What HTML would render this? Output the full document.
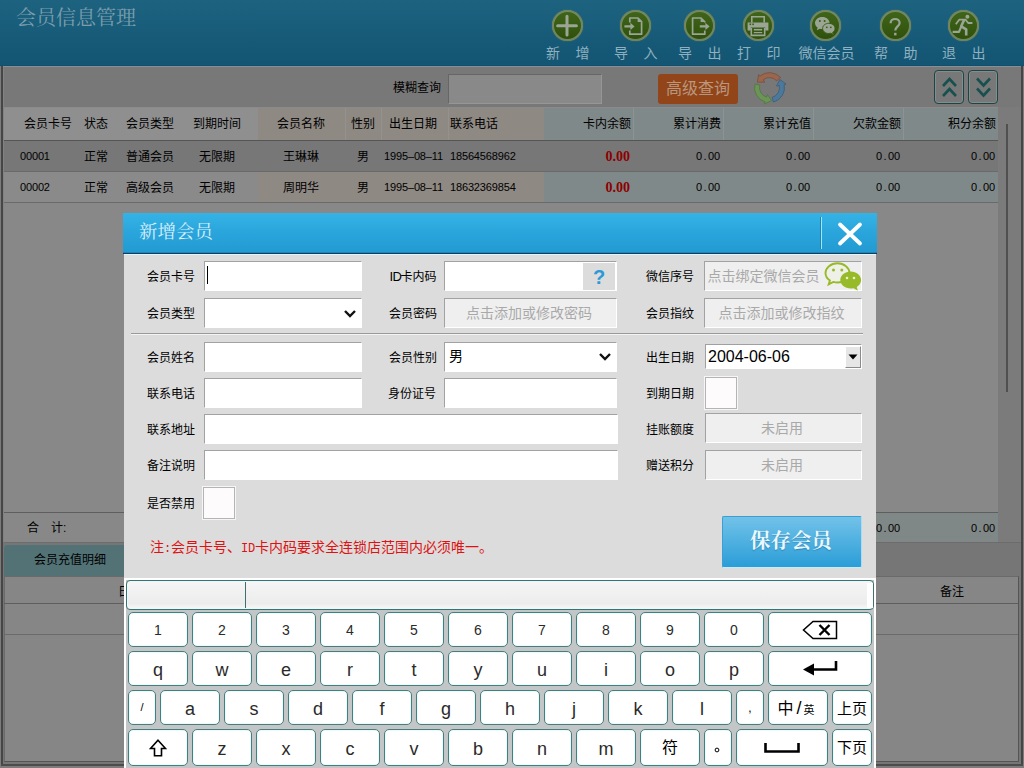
<!DOCTYPE html>
<html><head><meta charset="utf-8">
<style>
*{margin:0;padding:0;box-sizing:border-box}
html,body{width:1024px;height:768px;overflow:hidden}
body{position:relative;background:#888;font-family:"Liberation Sans","Noto Sans CJK SC",sans-serif;font-size:12px;color:#000}
.abs{position:absolute}
.t{position:absolute;white-space:nowrap;line-height:1}
/* header */
#hdr{left:0;top:0;width:1024px;height:66px;background:linear-gradient(#1d6380,#165a78 60%,#135573)}
#title{left:16px;top:8px;font-family:"Liberation Serif","Noto Serif CJK SC",serif;font-size:20px;color:#7d9dab;letter-spacing:0px}
.tb{position:absolute;top:9.800px;width:31.500px;height:31.500px;border-radius:50%;background:linear-gradient(#40651a,#375a12 55%,#2e4e0c);box-shadow:inset 0 0 0 1px #6f8562,inset 0 0 0 2px rgba(135,152,122,.75),0 0 1.500px rgba(125,145,115,.6)}.tb svg{position:absolute;left:-0.250px;top:-0.250px}
.tl{position:absolute;top:46px;font-size:14px;color:#8fb0be;white-space:nowrap;line-height:1}
/* bg */
#sbar{left:0;top:66px;width:1024px;height:41px;background:#787878}
.th{position:absolute;top:108px;height:32px;line-height:33px;font-size:12px;white-space:nowrap}
.c{text-align:center}.r{text-align:right}
.num{font-size:11px;letter-spacing:-0.15px}.num2{font-size:11px;letter-spacing:-0.1px}.p{display:inline-block;width:6px;text-align:center;font-style:normal}

#dlg{left:123px;top:213px;width:754px;height:555px}
#dtitle{left:0;top:0;width:754px;height:40px;background:linear-gradient(#35b3e5,#2ba6dd 45%,#229ad2)}
.lb{position:absolute;white-space:nowrap;font-size:12px;line-height:32px;height:30px;color:#000}
.in{position:absolute;height:30px;background:#fff;border:1px solid #a2a2a2;border-right-color:#fff;border-bottom-color:#fff}
.dis{background:#efefef;color:#a9a9a9;font-size:14px;line-height:29px;text-align:center;white-space:nowrap;padding-right:3px}
.ck{position:absolute;width:32px;height:32px;background:#fdfbfc;border:1px solid #b4b4b4;outline:1px solid #f6f6f6}
.k{position:absolute;height:35px;background:#fff;border:1px solid #4d7a7a;border-radius:5px;box-shadow:inset 0 0 0 1px #e6fdfd;text-align:center;font-size:18px;line-height:36px;color:#2a2a2a;white-space:nowrap}
.k.d{font-size:14px;line-height:34px}
.hw{display:inline-block;width:7px;text-align:center;font-size:12px;font-family:"Liberation Mono",monospace}
</style></head><body>
<!-- ===== background (dimmed) ===== -->
<div id="hdr" class="abs"></div>
<div id="title" class="t">会员信息管理</div>
<div id="sbar" class="abs"></div>

<div class="abs" style="left:0;top:65px;width:1024px;height:1px;background:#104f6d"></div>
<div class="abs" style="left:3px;top:66px;width:1018px;height:1px;background:#879097"></div>
<!-- toolbar icons -->
<div class="tb" style="left:551.5px"><svg width="32" height="32" viewBox="0 0 32 32"><path d="M16 6.300v18.800M6.600 15.700h18.800" stroke="#9aa595" stroke-width="3" stroke-linecap="round" fill="none"/></svg></div>
<div class="tb" style="left:619.5px"><svg width="32" height="32" viewBox="0 0 32 32"><path d="M10.800 12.500V8h8.200l3.600 3.600v12.600H10.800V20.400" stroke="#9aa595" stroke-width="1.700" fill="none" stroke-linejoin="round"/><path d="M18.600 8v4h4z" fill="#9aa595"/><path d="M5.400 15.200h6v-2.400l4.200 3.600-4.200 3.600v-2.400h-6z" fill="#9aa595"/></svg></div>
<div class="tb" style="left:683.5px"><svg width="32" height="32" viewBox="0 0 32 32"><path d="M21.800 20.400v3.800H9.600V8h8.400l3.800 3.800v0.800" stroke="#9aa595" stroke-width="1.700" fill="none" stroke-linejoin="round"/><path d="M17.600 8v4h4z" fill="#9aa595"/><path d="M16.800 15.200h5.600v-2.400l4.200 3.600-4.200 3.600v-2.400h-5.600z" fill="#9aa595"/></svg></div>
<div class="tb" style="left:742.5px"><svg width="32" height="32" viewBox="0 0 32 32"><path d="M9.800 12.500V6.800h12.400v5.700" stroke="#9aa595" stroke-width="1.600" fill="none"/><path d="M5.600 12.400h20.800v8H23.200v-3H8.800v3H5.600z" fill="#9aa595"/><rect x="7.500" y="13.500" width="1.600" height="1.600" fill="#3a5d13"/><rect x="10.300" y="13.500" width="1.600" height="1.600" fill="#3a5d13"/><path d="M9.300 18v7.400h13.400V18" fill="none" stroke="#9aa595" stroke-width="1.600"/><path d="M11.800 19.700h8.400" stroke="#9aa595" stroke-width="1.600"/><path d="M11.800 22.600h8.400" stroke="#9aa595" stroke-width="1.200"/></svg></div>
<div class="tb" style="left:809.5px"><svg width="32" height="32" viewBox="0 0 32 32"><path d="M13.300 7c-4.100 0-7.300 2.700-7.300 6 0 1.900 1 3.500 2.600 4.600l-.8 2.700 3-1.600c.8.200 1.600.3 2.500.3 4.100 0 7.300-2.700 7.300-6s-3.200-6-7.300-6z" fill="#9aa595"/><path d="M19.800 13.300c-3.400 0-6.200 2.300-6.200 5.100s2.800 5.100 6.200 5.100c.7 0 1.400-.1 2-.3l2.600 1.400-.7-2.300c1.400-.9 2.300-2.300 2.300-3.900 0-2.800-2.800-5.100-6.200-5.100z" fill="#9aa595" stroke="#3a5d13" stroke-width="1"/><circle cx="10.800" cy="11" r="1" fill="#3a5d13"/><circle cx="15.600" cy="11" r="1" fill="#3a5d13"/><circle cx="17.800" cy="17.300" r=".9" fill="#3a5d13"/><circle cx="21.800" cy="17.300" r=".9" fill="#3a5d13"/></svg></div>
<div class="tb" style="left:879.5px"><svg width="32" height="32" viewBox="0 0 32 32"><path d="M11.600 13.200c0-2.500 1.900-4.200 4.500-4.200s4.500 1.600 4.500 3.900c0 3.400-4.300 3.700-4.300 7.600" stroke="#9aa595" stroke-width="2.200" fill="none"/><rect x="15.100" y="22.800" width="2.400" height="2.600" fill="#9aa595"/></svg></div>
<div class="tb" style="left:947.5px"><svg width="32" height="32" viewBox="0 0 32 32"><circle cx="20.400" cy="6.800" r="2" fill="#9aa595"/><path d="M8.800 14.300l3.400-4.600h6.400l2.600 3.300h4.200" stroke="#9aa595" stroke-width="1.800" fill="none" stroke-linejoin="round"/><path d="M17.200 9.700l-3 6.600 5 3v6.300" stroke="#9aa595" stroke-width="2.600" fill="none" stroke-linejoin="round"/><path d="M14.300 16.300l-2.300 5.600H5.600" stroke="#9aa595" stroke-width="2.200" fill="none" stroke-linejoin="round"/></svg></div>
<div class="tl" style="left:546px">新<span style="display:inline-block;width:15.500px"></span>增</div>
<div class="tl" style="left:614px">导<span style="display:inline-block;width:15.500px"></span>入</div>
<div class="tl" style="left:678px">导<span style="display:inline-block;width:15.500px"></span>出</div>
<div class="tl" style="left:737px">打<span style="display:inline-block;width:15.500px"></span>印</div>
<div class="tl" style="left:798.5px">微信会员</div>
<div class="tl" style="left:874px">帮<span style="display:inline-block;width:15.500px"></span>助</div>
<div class="tl" style="left:942px">退<span style="display:inline-block;width:15.500px"></span>出</div>
<!-- left/right frame -->
<div class="abs" style="left:1px;top:66px;width:2px;height:702px;background:#464646"></div>
<div class="abs" style="left:0;top:66px;width:1px;height:702px;background:#7c7c7c"></div>
<div class="abs" style="left:3px;top:67px;width:1px;height:701px;background:#828282"></div>
<div class="abs" style="left:998px;top:107px;width:23px;height:436px;background:#7b7b7b"></div>
<div class="abs" style="left:1021px;top:66px;width:2px;height:702px;background:#464646"></div>
<div class="abs" style="left:1023px;top:66px;width:1px;height:702px;background:#7c7c7c"></div>
<div class="abs" style="left:1006px;top:124px;width:2px;height:268px;background:#505050"></div>
<!-- search bar -->
<div class="t" style="left:393px;top:82px;font-size:12px">模糊查询</div>
<div class="abs" style="left:448px;top:74px;width:154px;height:30px;background:#898989;border:1px solid #666;border-right-color:#969696;border-bottom-color:#969696"></div>
<div class="abs" style="left:658px;top:74px;width:80px;height:30px;background:#914519;border-radius:3px"></div>
<div class="t tl2" style="left:666px;top:81px;font-size:16px;color:#ba967e">高级查询</div>
<svg class="abs" style="left:746px;top:68px" width="48" height="40" viewBox="0 0 48 40"><path d="M30.800 12.800L34.500 9.400A15.000 15.000 0 0 0 13.900 8.100L12.600 6.600L11.400 14.200L18.900 14.100L17.100 11.900A10.000 10.000 0 0 1 30.800 12.800Z" fill="#9a674e" stroke="#7a4e3a" stroke-width=".8" stroke-linejoin="round"/><path d="M26.100 29.300L27.400 34.100A15.000 15.000 0 0 0 38.200 16.500L40.100 16.100L33.900 11.500L30.500 18.100L33.300 17.500A10.000 10.000 0 0 1 26.100 29.300Z" fill="#4c789a" stroke="#3a5d7c" stroke-width=".8" stroke-linejoin="round"/><path d="M13.800 17.200L8.900 16.000A15.000 15.000 0 0 0 19.100 33.900L18.500 35.900L25.600 32.600L21.400 26.500L20.600 29.200A10.000 10.000 0 0 1 13.800 17.200Z" fill="#6c9456" stroke="#50773f" stroke-width=".8" stroke-linejoin="round"/></svg>
<div class="abs" style="left:934px;top:70px;width:30px;height:34px;border:1px solid #1f4444;border-radius:4px;box-shadow:inset 0 0 0 1px rgba(150,180,180,.35)"></div>
<div class="abs" style="left:968px;top:70px;width:30px;height:34px;border:1px solid #1f4444;border-radius:4px;box-shadow:inset 0 0 0 1px rgba(150,180,180,.35)"></div>
<svg class="abs" style="left:934px;top:70px" width="64" height="34" viewBox="0 0 64 34"><path d="M9 16l6.500-7 6.500 7M9 26l6.500-7 6.500 7" stroke="#17504f" stroke-width="2.600" fill="none"/><path d="M43 8.500l6.500 7 6.500-7M43 18.500l6.500 7 6.500-7" stroke="#17504f" stroke-width="2.600" fill="none"/></svg>
<!-- table header -->
<div class="abs" style="left:4px;top:108px;width:994px;height:33px;background:#8f8f8f"></div>
<div class="abs" style="left:258px;top:108px;width:286px;height:33px;background:#8f8983"></div>
<div class="abs" style="left:544px;top:108px;width:454px;height:33px;background:#808989"></div>
<div class="abs" style="left:4px;top:107px;width:994px;height:1px;background:#8b8b8b"></div>
<div class="abs" style="left:4px;top:140px;width:994px;height:1px;background:#555"></div>
<!-- rows -->
<div class="abs" style="left:4px;top:141px;width:994px;height:30px;background:#777"></div>
<div class="abs" style="left:4px;top:171px;width:994px;height:1px;background:#6a6a6a"></div>
<div class="abs" style="left:4px;top:172px;width:994px;height:30px;background:#8a8a8a"></div>
<div class="abs" style="left:258px;top:172px;width:286px;height:30px;background:#8f8983"></div>
<div class="abs" style="left:544px;top:172px;width:454px;height:30px;background:#808989"></div>
<div class="abs" style="left:4px;top:202px;width:994px;height:1px;background:#6a6a6a"></div>
<div class="abs" style="left:345px;top:108px;width:1px;height:32px;background:#989898;opacity:.6"></div>
<div class="abs" style="left:381px;top:108px;width:1px;height:32px;background:#989898;opacity:.6"></div>
<div class="abs" style="left:448px;top:108px;width:1px;height:32px;background:#989898;opacity:.6"></div>
<div class="abs" style="left:633px;top:108px;width:1px;height:32px;background:#989898;opacity:.6"></div>
<div class="abs" style="left:723px;top:108px;width:1px;height:32px;background:#989898;opacity:.6"></div>
<div class="abs" style="left:813px;top:108px;width:1px;height:32px;background:#989898;opacity:.6"></div>
<div class="abs" style="left:903px;top:108px;width:1px;height:32px;background:#989898;opacity:.6"></div>
<div class="th c" style="left:-2px;width:100px">会员卡号</div>
<div class="th c" style="left:46px;width:100px">状态</div>
<div class="th c" style="left:100px;width:100px">会员类型</div>
<div class="th c" style="left:167px;width:100px">到期时间</div>
<div class="th c" style="left:251px;width:100px">会员名称</div>
<div class="th c" style="left:313px;width:100px">性别</div>
<div class="th c" style="left:363px;width:100px">出生日期</div>
<div class="th" style="left:450px">联系电话</div>
<div class="th r" style="left:531px;width:100px">卡内余额</div>
<div class="th r" style="left:621px;width:100px">累计消费</div>
<div class="th r" style="left:711px;width:100px">累计充值</div>
<div class="th r" style="left:801px;width:100px">欠款金额</div>
<div class="th r" style="left:896px;width:100px">积分余额</div>
<div class="th num" style="top:141px;height:30px;line-height:31px;left:20px">00001</div>
<div class="th c " style="top:141px;height:30px;line-height:32px;left:46px;width:100px">正常</div>
<div class="th c " style="top:141px;height:30px;line-height:32px;left:100px;width:100px">普通会员</div>
<div class="th c " style="top:141px;height:30px;line-height:32px;left:167px;width:100px">无限期</div>
<div class="th c " style="top:141px;height:30px;line-height:32px;left:251px;width:100px">王琳琳</div>
<div class="th c " style="top:141px;height:30px;line-height:32px;left:313px;width:100px">男</div>
<div class="th num" style="top:141px;height:30px;line-height:31px;left:384px">1995<i class="p">&#8211;</i>08<i class="p">&#8211;</i>11</div>
<div class="th num" style="top:141px;height:30px;line-height:31px;left:450px">18564568962</div>
<div class="th r" style="top:141px;height:30px;line-height:31px;left:530px;width:100px;font-family:'Liberation Serif',serif;font-weight:bold;font-size:14px;color:#8c0000">0.00</div>
<div class="th r num2" style="top:141px;height:30px;line-height:31px;left:620px;width:100px">0<i class="p">.</i>00</div>
<div class="th r num2" style="top:141px;height:30px;line-height:31px;left:710px;width:100px">0<i class="p">.</i>00</div>
<div class="th r num2" style="top:141px;height:30px;line-height:31px;left:800px;width:100px">0<i class="p">.</i>00</div>
<div class="th r num2" style="top:141px;height:30px;line-height:31px;left:895px;width:100px">0<i class="p">.</i>00</div>
<div class="th num" style="top:172px;height:30px;line-height:31px;left:20px">00002</div>
<div class="th c " style="top:172px;height:30px;line-height:32px;left:46px;width:100px">正常</div>
<div class="th c " style="top:172px;height:30px;line-height:32px;left:100px;width:100px">高级会员</div>
<div class="th c " style="top:172px;height:30px;line-height:32px;left:167px;width:100px">无限期</div>
<div class="th c " style="top:172px;height:30px;line-height:32px;left:251px;width:100px">周明华</div>
<div class="th c " style="top:172px;height:30px;line-height:32px;left:313px;width:100px">男</div>
<div class="th num" style="top:172px;height:30px;line-height:31px;left:384px">1995<i class="p">&#8211;</i>08<i class="p">&#8211;</i>11</div>
<div class="th num" style="top:172px;height:30px;line-height:31px;left:450px">18632369854</div>
<div class="th r" style="top:172px;height:30px;line-height:31px;left:530px;width:100px;font-family:'Liberation Serif',serif;font-weight:bold;font-size:14px;color:#8c0000">0.00</div>
<div class="th r num2" style="top:172px;height:30px;line-height:31px;left:620px;width:100px">0<i class="p">.</i>00</div>
<div class="th r num2" style="top:172px;height:30px;line-height:31px;left:710px;width:100px">0<i class="p">.</i>00</div>
<div class="th r num2" style="top:172px;height:30px;line-height:31px;left:800px;width:100px">0<i class="p">.</i>00</div>
<div class="th r num2" style="top:172px;height:30px;line-height:31px;left:895px;width:100px">0<i class="p">.</i>00</div>

<div class="abs" style="left:4px;top:512px;width:994px;height:1px;background:#5e5e5e"></div>
<div class="abs" style="left:4px;top:513px;width:994px;height:29px;background:#888"></div>
<div class="abs" style="left:544px;top:513px;width:454px;height:29px;background:#808787"></div>
<div class="t" style="left:27px;top:522px;font-size:12px">合<span style="display:inline-block;width:1em"></span>计:</div>
<div class="th r num2" style="top:513px;height:29px;line-height:30px;left:800px;width:100px">0<i class="p">.</i>00</div>
<div class="th r num2" style="top:513px;height:29px;line-height:30px;left:895px;width:100px">0<i class="p">.</i>00</div>
<div class="abs" style="left:3px;top:542px;width:1018px;height:222px;background:#767676"></div>
<div class="abs" style="left:4px;top:542px;width:1017px;height:1px;background:#6c6c6c"></div>
<div class="abs" style="left:4px;top:545px;width:130px;height:32px;background:#527276;border-radius:3px 3px 0 0"></div>
<div class="t" style="left:34px;top:554px;font-size:12px">会员充值明细</div>
<div class="abs" style="left:4px;top:576px;width:1015px;height:186px;background:#868686;border:1px solid #6a6a6a;border-right:1px solid #555;border-bottom:1px solid #555"></div>
<div class="abs" style="left:1px;top:764px;width:1022px;height:2px;background:#4c4c4c"></div>
<div class="abs" style="left:0;top:766px;width:1024px;height:2px;background:#7c7c7c"></div>
<div class="abs" style="left:4px;top:603px;width:1014px;height:1px;background:#5e5e5e"></div>
<div class="abs" style="left:4px;top:634px;width:1014px;height:1px;background:#6a6a6a"></div>
<div class="t" style="left:118px;top:586px;font-size:12px">日</div>
<div class="t" style="left:940px;top:586px;font-size:12px">备注</div>
<!-- BG-END -->
<!-- ===== dialog ===== -->

<div id="dlg" class="abs">
<div class="abs" style="left:1px;top:40px;width:752px;height:515px;background:#dcdcdc"></div>
<div id="dtitle" class="abs"></div>
<div class="abs" style="left:0;top:39px;width:754px;height:1px;background:#1b86bd"></div>
<div class="abs" style="left:0;top:40px;width:754px;height:1px;background:#123d5c"></div>
<div class="abs" style="left:1px;top:41px;width:752px;height:1px;background:#e4f4fa"></div>
<div class="t" style="left:16px;top:10px;font-family:'Liberation Serif','Noto Serif CJK SC',serif;font-size:18.500px;color:#d9eff9">新增会员</div>
<div class="abs" style="left:697px;top:4px;width:1px;height:32px;background:#1f86b8"></div>
<div class="abs" style="left:698px;top:4px;width:1px;height:32px;background:#9fe6fb"></div>
<svg class="abs" style="left:712px;top:7px" width="30" height="28" viewBox="0 0 30 28"><path d="M5 4.500L25 23.500M25 4.500L5 23.500" stroke="#fff" stroke-width="3.800" stroke-linecap="round"/></svg>
<!-- row1 -->
<div class="lb" style="left:24px;top:48px">会员卡号</div>
<div class="in" style="left:81px;top:48px;width:158px"></div>
<div class="abs" style="left:84px;top:53px;width:1px;height:18px;background:#000"></div>
<div class="lb" style="left:266.500px;top:48px"><span style="font-size:13px;letter-spacing:-0.700px;margin-right:-0.500px">ID</span>卡内码</div>
<div class="in" style="left:321px;top:48px;width:173px"></div>
<div class="abs" style="left:460px;top:50px;width:32px;height:27px;background:#dcdcdc;text-align:center;font-size:20px;font-weight:bold;color:#2c9ad6;line-height:28px">?</div>
<div class="lb" style="left:523px;top:48px">微信序号</div>
<div class="in dis" style="left:581px;top:48px;width:158px;text-align:left;padding-left:2.500px">点击绑定微信会员</div>
<svg class="abs" style="left:701px;top:49px" width="38" height="30" viewBox="0 0 38 30">
<path d="M13.500 1.300C6.800 1.300 1.500 5.700 1.500 11c0 3 1.700 5.700 4.400 7.500L4.700 22.300l4.600-2.400c1.300.4 2.700.6 4.200.6 6.700 0 12-4.300 12-9.500S20.200 1.300 13.500 1.300z" fill="#eff1e8" stroke="#97ba28" stroke-width="1.900"/>
<circle cx="9.500" cy="8" r="1.500" fill="#97ba28"/><circle cx="17.800" cy="8" r="1.500" fill="#97ba28"/>
<path d="M26.700 9.600c-5.700 0-10.400 3.800-10.400 8.500s4.700 8.500 10.400 8.500c1 0 2-.1 2.900-.4l4.200 2.500-1-3.700c2.600-1.600 4.300-4.100 4.300-6.900 0-4.700-4.700-8.500-10.400-8.500z" fill="#97ba28"/>
<circle cx="23" cy="16" r="1.300" fill="#e9f1cf"/><circle cx="30" cy="16" r="1.300" fill="#e9f1cf"/>
</svg>
<!-- row2 -->
<div class="lb" style="left:24px;top:85px">会员类型</div>
<div class="in" style="left:81px;top:85px;width:158px"></div>
<svg class="abs" style="left:220px;top:96px" width="14" height="10" viewBox="0 0 14 10"><path d="M2 2l5 5 5-5" stroke="#111" stroke-width="2.400" fill="none"/></svg>
<div class="lb" style="left:266px;top:85px">会员密码</div>
<div class="in dis" style="left:321px;top:85px;width:173px">点击添加或修改密码</div>
<div class="lb" style="left:523px;top:85px">会员指纹</div>
<div class="in dis" style="left:581px;top:85px;width:158px">点击添加或修改指纹</div>
<!-- separator -->
<div class="abs" style="left:8px;top:120px;width:732px;height:1px;background:#9a9a9a"></div>
<div class="abs" style="left:8px;top:121px;width:732px;height:1px;background:#f4f4f4"></div>
<!-- row3 -->
<div class="lb" style="left:24px;top:129px">会员姓名</div>
<div class="in" style="left:81px;top:129px;width:158px"></div>
<div class="lb" style="left:266px;top:129px">会员性别</div>
<div class="in" style="left:321px;top:129px;width:173px;font-size:14px;line-height:27px;padding-left:4px">男</div>
<svg class="abs" style="left:475px;top:139px" width="14" height="10" viewBox="0 0 14 10"><path d="M2 2l5 5 5-5" stroke="#111" stroke-width="2.400" fill="none"/></svg>
<div class="lb" style="left:523px;top:129px">出生日期</div>
<div class="in" style="left:582px;top:131px;width:157px;height:25px;font-size:16px;line-height:24px;padding-left:2px;border-color:#a0a0a0 #fff #fff #a0a0a0">2004-06-06</div>
<div class="abs" style="left:722px;top:133px;width:16px;height:22px;background:#e6e6e6;border:1px solid #fff;border-right-color:#8a8a8a;border-bottom-color:#8a8a8a"></div>
<svg class="abs" style="left:725px;top:141px" width="10" height="6" viewBox="0 0 10 6"><path d="M0.500 0.500h9L5 5.500z" fill="#000"/></svg>
<!-- row4 -->
<div class="lb" style="left:24px;top:165px">联系电话</div>
<div class="in" style="left:81px;top:165px;width:158px"></div>
<div class="lb" style="left:265px;top:165px">身份证号</div>
<div class="in" style="left:321px;top:165px;width:173px"></div>
<div class="lb" style="left:523px;top:165px">到期日期</div>
<div class="ck" style="left:582px;top:164px"></div>
<!-- row5 -->
<div class="lb" style="left:24px;top:201px">联系地址</div>
<div class="in" style="left:81px;top:201px;width:414px"></div>
<div class="lb" style="left:523px;top:201px">挂账额度</div>
<div class="in dis" style="left:582px;top:200px;width:157px">未启用</div>
<!-- row6 -->
<div class="lb" style="left:24px;top:237px">备注说明</div>
<div class="in" style="left:81px;top:237px;width:414px"></div>
<div class="lb" style="left:523px;top:237px">赠送积分</div>
<div class="in dis" style="left:582px;top:237px;width:157px">未启用</div>
<!-- row7 -->
<div class="lb" style="left:24px;top:275px">是否禁用</div>
<div class="ck" style="left:80px;top:274px"></div>
<div class="t note" style="left:27px;top:327px;font-size:14px;color:#de1212">注<span class="hw">:</span>会员卡号、<span class="hw">I</span><span class="hw">D</span>卡内码要求全连锁店范围内必须唯一。</div>
<!-- save -->
<div class="abs" style="left:599px;top:303px;width:140px;height:52px;background:linear-gradient(#72c2e8,#4eb0e0 50%,#2b9dd7);border:1px solid #3a9fd2;border-bottom-color:#c6ebf9;border-right-color:#a9dcf2;border-radius:2px"></div>
<div class="t" style="left:627px;top:318px;font-family:'Liberation Serif','Noto Serif CJK SC',serif;font-weight:bold;font-size:20.500px;color:#eaf7fd;text-shadow:0 1px 1px rgba(0,60,110,.35)">保存会员</div>
<!-- keyboard -->
<div class="abs" style="left:1px;top:365px;width:752px;height:190px;background:#fff"></div>
<div class="abs" style="left:3px;top:367px;width:748px;height:188px;background:#c3c6c6"></div>
<div class="abs" style="left:3px;top:367px;width:748px;height:30px;border:1px solid #3f7070;border-radius:4px;background:linear-gradient(#f6f6f6,#ececec 80%,#f8f8f8);box-shadow:inset 0 0 0 1px #e4fbfb"></div>
<div class="abs" style="left:122px;top:369px;width:1px;height:26px;background:#3f7070"></div>
<div class="abs" style="left:744px;top:370px;width:6px;height:25px;background:#fff"></div>
<div class="k d" style="left:5px;top:399px;width:60px;height:35px">1</div>
<div class="k d" style="left:69px;top:399px;width:60px;height:35px">2</div>
<div class="k d" style="left:133px;top:399px;width:60px;height:35px">3</div>
<div class="k d" style="left:197px;top:399px;width:60px;height:35px">4</div>
<div class="k d" style="left:261px;top:399px;width:60px;height:35px">5</div>
<div class="k d" style="left:325px;top:399px;width:60px;height:35px">6</div>
<div class="k d" style="left:389px;top:399px;width:60px;height:35px">7</div>
<div class="k d" style="left:453px;top:399px;width:60px;height:35px">8</div>
<div class="k d" style="left:517px;top:399px;width:60px;height:35px">9</div>
<div class="k d" style="left:581px;top:399px;width:60px;height:35px">0</div>
<div class="k " style="left:645px;top:399px;width:104px;height:35px"><svg width="36" height="20" viewBox="0 0 36 20" style="display:block;margin:6.500px auto 0"><path d="M11 1.500H34.500V18.500H11L1.500 10z" fill="none" stroke="#000" stroke-width="1.500"/><path d="M17.500 5l10 10M27.500 5l-10 10" stroke="#000" stroke-width="2.400"/></svg></div>
<div class="k " style="left:5px;top:438px;width:60px;height:35px">q</div>
<div class="k " style="left:69px;top:438px;width:60px;height:35px">w</div>
<div class="k " style="left:133px;top:438px;width:60px;height:35px">e</div>
<div class="k " style="left:197px;top:438px;width:60px;height:35px">r</div>
<div class="k " style="left:261px;top:438px;width:60px;height:35px">t</div>
<div class="k " style="left:325px;top:438px;width:60px;height:35px">y</div>
<div class="k " style="left:389px;top:438px;width:60px;height:35px">u</div>
<div class="k " style="left:453px;top:438px;width:60px;height:35px">i</div>
<div class="k " style="left:517px;top:438px;width:60px;height:35px">o</div>
<div class="k " style="left:581px;top:438px;width:60px;height:35px">p</div>
<div class="k " style="left:645px;top:438px;width:104px;height:35px"><svg width="36" height="16" viewBox="0 0 36 16" style="display:block;margin:8.300px auto 0"><path d="M34 1v8.500H10" stroke="#000" stroke-width="2.600" fill="none"/><path d="M1 9.500L12 3.500v12z" fill="#000"/></svg></div>
<div class="k " style="left:5px;top:477px;width:28px;height:35px"><span style="font-size:11px;position:relative;top:-4px;color:#000">/</span></div>
<div class="k " style="left:37px;top:477px;width:60px;height:35px">a</div>
<div class="k " style="left:101px;top:477px;width:60px;height:35px">s</div>
<div class="k " style="left:165px;top:477px;width:60px;height:35px">d</div>
<div class="k " style="left:229px;top:477px;width:60px;height:35px">f</div>
<div class="k " style="left:293px;top:477px;width:60px;height:35px">g</div>
<div class="k " style="left:357px;top:477px;width:60px;height:35px">h</div>
<div class="k " style="left:421px;top:477px;width:60px;height:35px">j</div>
<div class="k " style="left:485px;top:477px;width:60px;height:35px">k</div>
<div class="k " style="left:549px;top:477px;width:60px;height:35px">l</div>
<div class="k " style="left:613px;top:477px;width:28px;height:35px"><span style="font-size:12px;position:relative;top:-3px;color:#000">,</span></div>
<div class="k " style="left:645px;top:477px;width:60px;height:35px"><span style="color:#000;position:relative;left:-2px;top:-1px"><span style="font-size:16px">中</span><span style="font-size:18px;margin:0 2px 0 3px">/</span><span style="font-size:11px">英</span></span></div>
<div class="k " style="left:709px;top:477px;width:40px;height:35px"><span style="font-size:15px;color:#000;position:relative;top:-1.500px">上页</span></div>
<div class="k " style="left:5px;top:516px;width:60px;height:37px;line-height:39px"><svg width="18" height="18" viewBox="0 0 18 18" style="display:block;margin:8.600px auto 0"><path d="M9 1.200L16.500 9.500H12.500V16.800H5.500V9.500H1.500z" fill="#fff" stroke="#000" stroke-width="1.600"/></svg></div>
<div class="k " style="left:69px;top:516px;width:60px;height:37px;line-height:39px">z</div>
<div class="k " style="left:133px;top:516px;width:60px;height:37px;line-height:39px">x</div>
<div class="k " style="left:197px;top:516px;width:60px;height:37px;line-height:39px">c</div>
<div class="k " style="left:261px;top:516px;width:60px;height:37px;line-height:39px">v</div>
<div class="k " style="left:325px;top:516px;width:60px;height:37px;line-height:39px">b</div>
<div class="k " style="left:389px;top:516px;width:60px;height:37px;line-height:39px">n</div>
<div class="k " style="left:453px;top:516px;width:60px;height:37px;line-height:39px">m</div>
<div class="k " style="left:517px;top:516px;width:60px;height:37px;line-height:39px"><span style="font-size:16px;color:#000;position:relative;top:-2.500px">符</span></div>
<div class="k " style="left:581px;top:516px;width:28px;height:37px;line-height:39px"><svg width="6" height="6" viewBox="0 0 6 6" style="display:block;margin:16.500px 0 0 8.500px"><circle cx="3" cy="3" r="1.900" fill="none" stroke="#000" stroke-width="1"/></svg></div>
<div class="k " style="left:613px;top:516px;width:92px;height:37px;line-height:39px"><svg width="36" height="10" viewBox="0 0 36 10" style="display:block;margin:13px auto 0"><path d="M1.500 0v8.500h33V0" stroke="#000" stroke-width="2.600" fill="none"/></svg></div>
<div class="k " style="left:709px;top:516px;width:40px;height:37px;line-height:39px"><span style="font-size:15px;color:#000;position:relative;top:-2.500px">下页</span></div>

</div>

</body></html>
